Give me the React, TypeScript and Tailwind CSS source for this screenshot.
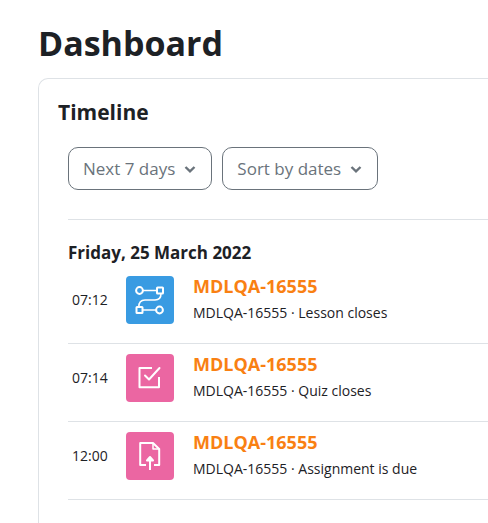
import type { ReactNode } from 'react';
import clsx from 'clsx';

interface TimelineEvent {
  id: number;
  time: string;
  name: string;
  course: string;
  action: string;
  color: string;
  icon: ReactNode;
}

function LessonIcon() {
  return (
    <svg width="32" height="32" viewBox="0 0 32 32" fill="none" stroke="currentColor" strokeWidth="2" aria-hidden="true">
      <circle cx="5.5" cy="6.5" r="3.4" />
      <rect x="23" y="3.5" width="6" height="6" rx="0.6" />
      <rect x="2.5" y="23" width="6" height="6" rx="0.6" />
      <circle cx="25.5" cy="26" r="3.4" />
      <path d="M9 6.5H23M8.5 26H22M27 9.5C27 14 24.5 16 21 16H11C7 16 4.8 18.5 4.8 23" strokeWidth="1.6" />
    </svg>
  );
}

function QuizIcon() {
  return (
    <svg width="32" height="32" viewBox="0 0 32 32" fill="none" stroke="currentColor" strokeWidth="2" strokeLinejoin="round" aria-hidden="true">
      <path d="M18 6H5.5V25.2H25V15" />
      <path d="M11 13.5L15 17.5L25.5 6" strokeLinecap="round" />
    </svg>
  );
}

function AssignmentIcon() {
  return (
    <svg width="32" height="32" viewBox="0 0 32 32" fill="none" stroke="currentColor" strokeWidth="2" strokeLinejoin="round" aria-hidden="true">
      <path d="M12 25H6.2V3H19L25.2 9V25H20" />
      <path d="M19 3V9H25.2" strokeWidth="1.5" />
      <path d="M16 30V18" />
      <path d="M16 17L13 20.5H19Z" fill="currentColor" />
    </svg>
  );
}

const events: TimelineEvent[] = [
  {
    id: 1,
    time: '07:12',
    name: 'MDLQA-16555',
    course: 'MDLQA-16555',
    action: 'Lesson closes',
    color: 'bg-[#399be2]',
    icon: <LessonIcon />,
  },
  {
    id: 2,
    time: '07:14',
    name: 'MDLQA-16555',
    course: 'MDLQA-16555',
    action: 'Quiz closes',
    color: 'bg-[#eb66a2]',
    icon: <QuizIcon />,
  },
  {
    id: 3,
    time: '12:00',
    name: 'MDLQA-16555',
    course: 'MDLQA-16555',
    action: 'Assignment is due',
    color: 'bg-[#eb66a2]',
    icon: <AssignmentIcon />,
  },
];

function FilterButton({ label }: { label: string }) {
  return (
    <button
      type="button"
      aria-haspopup="menu"
      className="flex h-[43px] items-center gap-2 rounded-[10px] border border-[#6a737b] px-[14px] text-[17px] text-[#6a737b]"
    >
      {label}
      <svg width="14" height="10" viewBox="0 0 14 10" fill="none" stroke="currentColor" strokeWidth="2.4" aria-hidden="true">
        <path d="M2.5 3L7 7.3L11.5 3" />
      </svg>
    </button>
  );
}

function EventRow({ event }: { event: TimelineEvent }) {
  return (
    <li className="flex border-b border-[#dee2e6] pt-[10px] pb-[19px]">
      <time className="w-[58px] shrink-0 pl-1 text-[14px] leading-[48px]">{event.time}</time>
      <span className={clsx('flex size-12 shrink-0 items-center justify-center rounded text-white', event.color)}>
        {event.icon}
      </span>
      <div className="ml-[19px] min-w-0">
        <h4 className="text-[18px] leading-5 font-bold">
          <a href="#" className="text-[#f98012]">
            {event.name}
          </a>
        </h4>
        <p className="mt-1.5 text-[14px] leading-[22px]">
          {event.course} · {event.action}
        </p>
      </div>
    </li>
  );
}

export default function App() {
  return (
    <main className="flex min-h-screen flex-col bg-white pt-5 pl-[38px] font-['Open_Sans','Noto_Sans',sans-serif] text-[#1d2125]">
      <h1 className="text-[34px] leading-[46px] font-bold">Dashboard</h1>
      <section className="mt-3 grow rounded-tl-[10px] border-t border-l border-[#dee2e6] pt-[19px] pl-[19px]">
        <h2 className="text-[21px] leading-7 font-bold">Timeline</h2>
        <div className="mt-[21px] pl-[10px]">
          <div className="flex gap-[10px]">
            <FilterButton label="Next 7 days" />
            <FilterButton label="Sort by dates" />
          </div>
          <div className="mt-[29px] border-t border-[#dee2e6] pt-[21px]">
            <h3 className="text-[17px] leading-6 font-bold">Friday, 25 March 2022</h3>
            <ul className="mt-px">
              {events.map((event) => (
                <EventRow key={event.id} event={event} />
              ))}
            </ul>
          </div>
        </div>
      </section>
    </main>
  );
}
